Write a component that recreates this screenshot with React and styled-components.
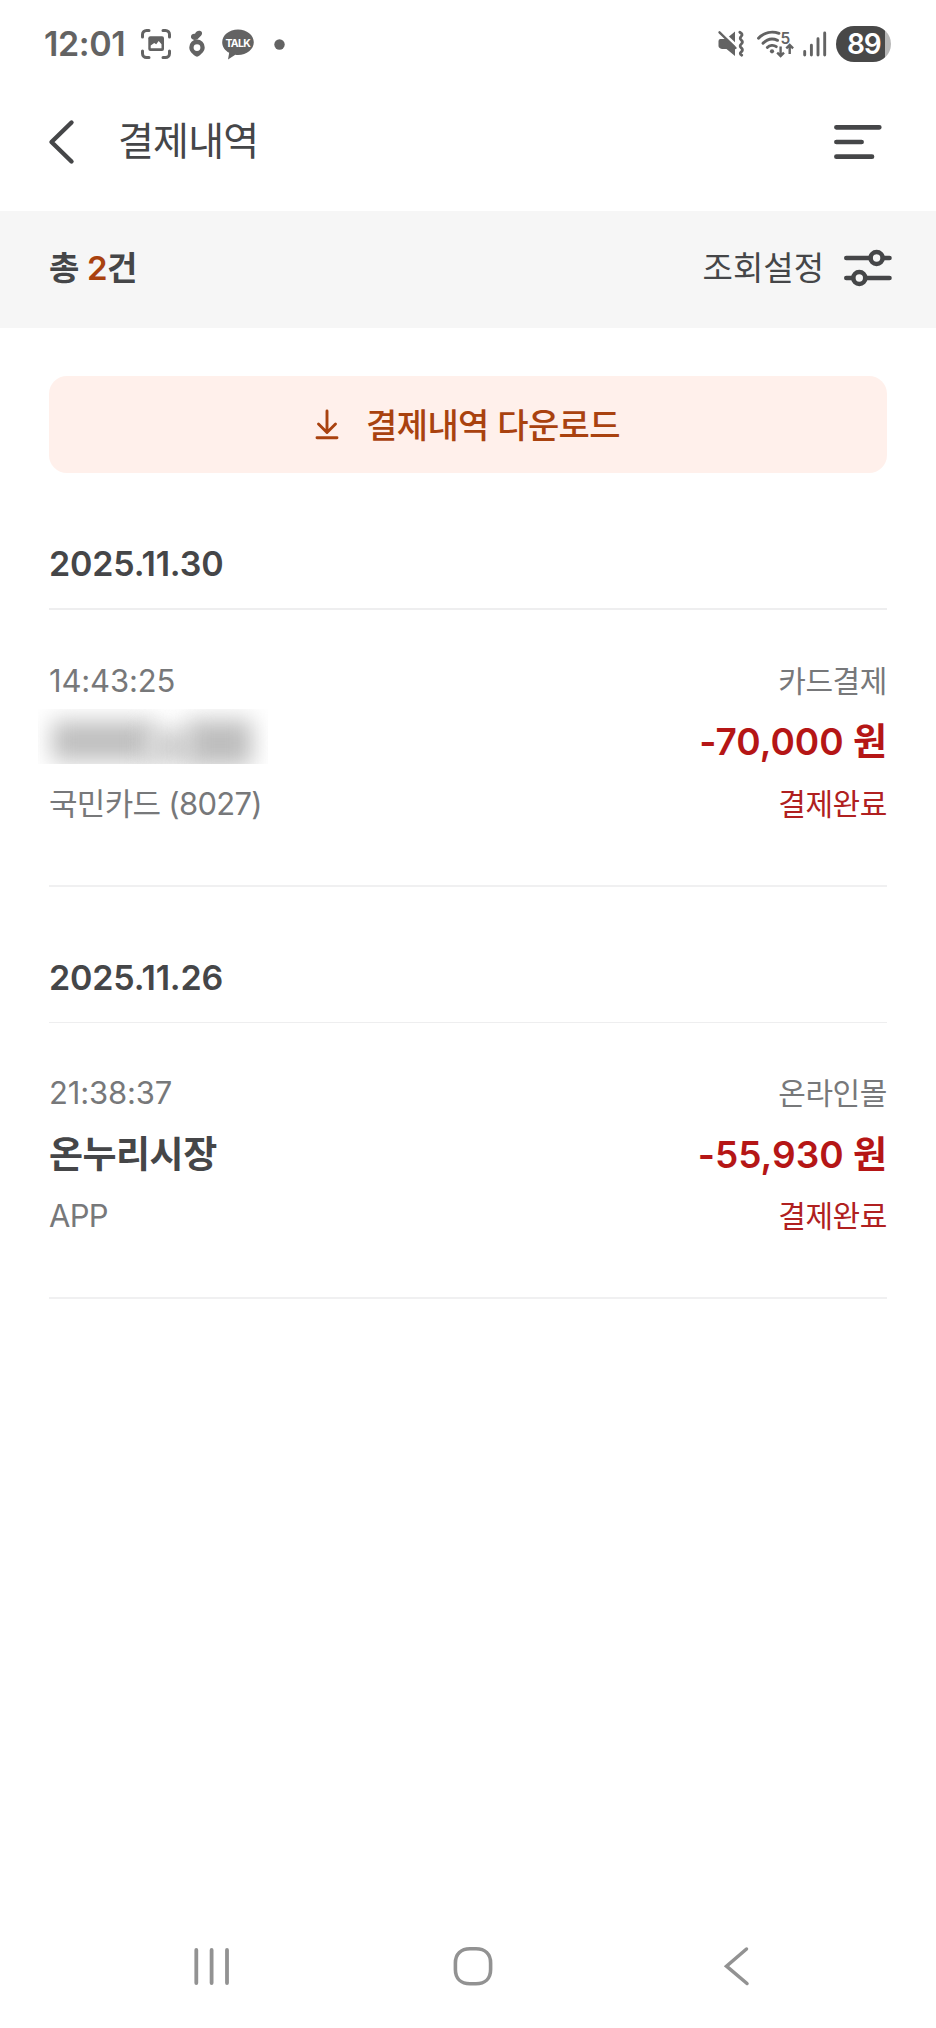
import React from "react";
import styled, { createGlobalStyle } from "styled-components";

const GlobalStyle = createGlobalStyle`
  * { box-sizing: border-box; }
  html, body { margin: 0; padding: 0; background: #fff; }
  body { font-family: Inter, "Noto Sans CJK KR", sans-serif; color: #454648; }
  button { font: inherit; border: 0; background: none; padding: 0; margin: 0; color: inherit; }
  svg { display: block; flex: none; overflow: visible; }
`;

const Screen = styled.div`
  width: 936px;
  height: 2028px;
  display: flex;
  flex-direction: column;
  background: #fff;
  overflow: hidden;
`;

const StatusBar = styled.div`
  height: 88px;
  flex: none;
  display: flex;
  justify-content: space-between;
  align-items: center;
  padding: 0 45px 0 44px;
  color: #636363;
`;

const StatusGroup = styled.div`
  display: flex;
  align-items: center;
`;

const Clock = styled.span`
  width: 97px;
  font-size: 34px;
  line-height: 40px;
  font-weight: 600;
  letter-spacing: -0.4px;
  white-space: nowrap;
`;

const Battery = styled.div`
  width: 55px;
  height: 36px;
  margin-left: 9px;
  border-radius: 18px;
  background: linear-gradient(90deg, #484848 0 48.5px, #b8b8b8 48.5px);
  color: #fff;
  font-size: 28px;
  line-height: 37px;
  font-weight: 600;
  letter-spacing: -1.2px;
  padding-left: 11px;
`;

const Header = styled.header`
  height: 123px;
  flex: none;
  display: flex;
  align-items: flex-start;
  padding: 25px 48px 0;
`;

const HeaderIcon = styled.span`
  display: flex;
  padding-top: ${(p) => p.$drop}px;
`;

const HeaderTitle = styled.h1`
  flex: 1;
  margin: 0 0 0 44px;
  font-size: 39px;
  line-height: 56px;
  font-weight: 400;
  letter-spacing: -0.8px;
`;

const SummaryBar = styled.div`
  height: 117px;
  flex: none;
  display: flex;
  align-items: center;
  justify-content: space-between;
  padding: 0 42px 4px 49px;
  background: #f6f6f6;
`;

const Total = styled.div`
  font-size: 33px;
  line-height: 44px;
  font-weight: 600;
  letter-spacing: -0.4px;
`;

const Count = styled.span`
  color: #a9420f;
`;

const FilterButton = styled.button`
  display: flex;
  align-items: center;
  gap: 20px;
  font-size: 33px;
  line-height: 44px;
`;

const Content = styled.main`
  flex: 1;
  padding: 48px 49px 0;
`;

const DownloadButton = styled.button`
  width: 100%;
  height: 97px;
  display: flex;
  align-items: center;
  justify-content: center;
  gap: 27px;
  padding: 0 1px 2px 0;
  border-radius: 18px;
  background: #fff0eb;
  color: #a9420f;
  font-size: 34px;
  font-weight: 500;
  letter-spacing: -0.6px;
`;

const DateHeading = styled.h2`
  margin: 0;
  padding: 69px 0 22px;
  border-bottom: ${(p) => p.$rule}px solid #eeeeef;
  font-size: 34px;
  line-height: 44px;
  font-weight: 600;
  letter-spacing: -0.15px;
`;

const Entry = styled.div`
  padding: 40px 0 50px;
  border-bottom: 2px solid #f0f0f1;
`;

const EntryRow = styled.div`
  height: 61.5px;
  display: flex;
  align-items: center;
  justify-content: space-between;
`;

const Meta = styled.span`
  font-size: 31px;
  line-height: 44px;
  letter-spacing: ${(p) => (p.$tight ? -0.7 : -0.15)}px;
  color: #77787a;
`;

const MetaKo = styled(Meta)`
  font-size: 30px;
  letter-spacing: -0.4px;
  color: ${(p) => (p.$done ? "#b02020" : "#77787a")};
`;

const Merchant = styled.strong`
  font-size: 37px;
  line-height: 50px;
  font-weight: 600;
  letter-spacing: -0.5px;
`;

const Amount = styled.strong`
  font-size: 37px;
  line-height: 50px;
  font-weight: 600;
  color: #b51616;
`;

const HiddenName = styled.div`
  width: 230px;
  height: 55px;
  margin: -12px 0 0 -11px;
  overflow: hidden;
  display: flex;
  align-items: center;
`;

const Smudge = styled.div`
  flex: none;
  width: ${(p) => p.$w}px;
  height: ${(p) => p.$h}px;
  margin-left: ${(p) => p.$x}px;
  margin-top: ${(p) => p.$y}px;
  background: ${(p) => p.$c};
  filter: blur(11px);
`;

const NavBar = styled.nav`
  height: 124px;
  flex: none;
  display: flex;
  align-items: center;
  justify-content: space-between;
  padding: 0 185px 0 191px;
`;

const CaptureIcon = () => (
  <svg width="30" height="30" viewBox="0 0 30 30" fill="none">
    <path d="M1.5 8V5.5a4 4 0 0 1 4-4H8M22 1.5h2.5a4 4 0 0 1 4 4V8M28.500 22v2.500a4 4 0 0 1-4 4H22M8 28.500H5.500a4 4 0 0 1-4-4V22" stroke="#636363" strokeWidth="3" strokeLinecap="round" />
    <rect x="7.300" y="7.300" width="15.700" height="14.700" rx="2" fill="#636363" />
    <path d="M9.700 19.200v-2.700l3.500-2.500 2 1.200 2.500-3.300 2.800 3.300v4z" fill="#fff" />
  </svg>
);

const CharmIcon = () => (
  <svg width="16" height="28" viewBox="0 0 16 28" fill="#636363">
    <path d="M2 7.500C1.500 5 3.500 3.500 6 3.800 7 1.200 9.500.2 11.500 1c2 .8 2 3 .7 4.500L8.500 9.300C6 10.500 2.800 10 2 7.500z" />
    <path fillRule="evenodd" d="M8 9.500a7.700 7.700 0 0 1 7.700 7.700c0 4-2.700 6-5.200 8.300-1.500 1.500-3.500 1.500-5 0C3 23.200.3 21.200.3 17.200A7.700 7.700 0 0 1 8 9.500zm0 4.700a3.400 3.400 0 1 0 0 6.800 3.400 3.400 0 0 0 0-6.800z" />
  </svg>
);

const TalkIcon = () => (
  <svg width="32" height="31" viewBox="0 0 32 31">
    <path d="M16 .5C7.200.5.200 6.200.200 13.200c0 4.500 2.800 8.300 7 10.600l-1.200 6.600 7.300-4.700c.9.100 1.800.2 2.700.2 8.800 0 15.800-5.700 15.800-12.700S24.800.500 16 .500z" fill="#636363" />
    <text x="15.800" y="17.500" textAnchor="middle" fontFamily="Inter, sans-serif" fontSize="10.500" fontWeight="700" letterSpacing="-0.700" fill="#fff">TALK</text>
  </svg>
);

const DotIcon = () => (
  <svg width="11" height="11" viewBox="0 0 11 11">
    <circle cx="5.500" cy="5.500" r="5.200" fill="#636363" />
  </svg>
);

const MuteIcon = () => (
  <svg width="27" height="26" viewBox="0 0 27 26" fill="none">
    <path d="M.5 10q0-2 2-2H8L17 .5v24.500l-8.500-7H4q-3.500-1-3.500-3z" fill="#636363" />
    <path d="M2.500-.5 20 16" stroke="#fff" strokeWidth="2.800" />
    <path d="M1.500 1.300 17.500 17" stroke="#636363" strokeWidth="2.400" strokeLinecap="round" />
    <path d="M21.800 1.300q3.600 2 1.500 3.900t0 3.900q2.300 2 0 3.900t0 3.900q2.300 2 0 3.900t.500 3.400" stroke="#636363" strokeWidth="2.800" strokeLinecap="round" strokeLinejoin="round" />
  </svg>
);

const WifiIcon = () => (
  <svg width="38" height="28" viewBox="0 0 38 28" fill="none">
    <g stroke="#636363" strokeWidth="2.900" strokeLinecap="round">
      <path d="M1.500 8.300C7.200 2.300 15 .700 22 3.300" />
      <path d="M6 13.300c4-4.100 9.500-5.200 14.500-3" />
      <path d="M10.300 17.500c2.300-2.400 6.300-2.900 9-.8" />
    </g>
    <circle cx="15" cy="21.300" r="2.100" fill="#636363" />
    <text x="23.500" y="13.500" fontFamily="Inter, sans-serif" fontSize="15.500" fontWeight="600" fill="#636363">5</text>
    <path d="M23.600 16.500v9M20.200 22.700l3.400 3.400 3.400-3.400M32.700 24v-8.500M29.300 18.300l3.400-3.400 3.400 3.400" stroke="#636363" strokeWidth="2.400" />
  </svg>
);

const SignalIcon = () => (
  <svg width="24" height="26" viewBox="0 0 24 26" stroke="#636363" strokeWidth="2.900" strokeLinecap="round">
    <path d="M1.700 20.500v3.500M8.400 14.300V24M15 7.700V24M21.700 2v22" />
  </svg>
);

const BackIcon = () => (
  <svg width="26" height="44" viewBox="0 0 26 44" fill="none" stroke="#454648" strokeWidth="4.400" strokeLinecap="round" strokeLinejoin="round">
    <path d="M23.500 2.500 3.500 22l20 19.500" />
  </svg>
);

const MenuIcon = () => (
  <svg width="54" height="36" viewBox="0 0 54 36" stroke="#454648" strokeWidth="4.700" strokeLinecap="round">
    <path d="M2.400 3.300H45.300M2.400 18H27.600M2.400 32.700H38" />
  </svg>
);

const SlidersIcon = () => (
  <svg width="50" height="38" viewBox="0 0 50 38" fill="#f6f6f6" stroke="#454648" strokeWidth="4.600" strokeLinecap="round">
    <path d="M2.300 9h43.200M2.300 29h43.200" />
    <circle cx="32.600" cy="9" r="6" />
    <circle cx="15.300" cy="29" r="6" />
  </svg>
);

const DownloadIcon = () => (
  <svg width="24" height="32" viewBox="0 0 24 32" fill="none" stroke="#a9420f" strokeWidth="2.900" strokeLinecap="round" strokeLinejoin="round">
    <path d="M12 3v20.500M3.500 16l8.500 8.500 8.500-8.500M2 29.700h20" />
  </svg>
);

const RecentsIcon = () => (
  <svg width="42" height="44" viewBox="0 0 42 44" stroke="#929292" strokeWidth="3.800" strokeLinecap="round">
    <path d="M5.300 6v33M20.600 6v33M36 6v33" />
  </svg>
);

const HomeShape = styled.svg`
  margin-right: 8px;
`;

const HomeIcon = () => (
  <HomeShape width="44" height="44" viewBox="0 0 44 44" fill="none" stroke="#929292" strokeWidth="3.600">
    <path d="M19 4.700h6C34 4.700 39.600 10 39.600 19v6.500c0 9-5.600 14.300-14.600 14.300h-6C10 39.800 4.400 34.500 4.400 25.500V19C4.400 10 10 4.700 19 4.700z" />
  </HomeShape>
);

const NavBackIcon = () => (
  <svg width="30" height="44" viewBox="0 0 30 44" fill="none" stroke="#929292" strokeWidth="3.500" strokeLinecap="round">
    <path d="M25.500 5 5.500 22.200l20.500 17.300" />
  </svg>
);

const Spaced = styled.span`
  display: flex;
  margin-left: ${(p) => p.$gap}px;
`;

const BlurredName = () => (
  <HiddenName>
    <Smudge $w={102} $h={40} $x={14} $y={10} $c="#bfbfbf" />
    <Smudge $w={48} $h={34} $x={-8} $y={22} $c="#cfcfcf" />
    <Smudge $w={64} $h={46} $x={-6} $y={14} $c="#bdbdbd" />
  </HiddenName>
);

const sections = [
  {
    date: "2025.11.30",
    rule: 2,
    time: "14:43:25",
    channel: "카드결제",
    merchant: null,
    amount: "-70,000 원",
    method: "국민카드 (8027)",
  },
  {
    date: "2025.11.26",
    rule: 1,
    time: "21:38:37",
    channel: "온라인몰",
    merchant: "온누리시장",
    amount: "-55,930 원",
    method: "APP",
  },
];

export default function App() {
  return (
    <Screen>
      <GlobalStyle />
      <StatusBar>
        <StatusGroup>
          <Clock>12:01</Clock>
          <CaptureIcon />
          <Spaced $gap={18}><CharmIcon /></Spaced>
          <Spaced $gap={17}><TalkIcon /></Spaced>
          <Spaced $gap={20}><DotIcon /></Spaced>
        </StatusGroup>
        <StatusGroup>
          <MuteIcon />
          <Spaced $gap={12}><WifiIcon /></Spaced>
          <Spaced $gap={8}><SignalIcon /></Spaced>
          <Battery>89</Battery>
        </StatusGroup>
      </StatusBar>
      <Header>
        <HeaderIcon $drop={7}><BackIcon /></HeaderIcon>
        <HeaderTitle>결제내역</HeaderTitle>
        <HeaderIcon $drop={11}><MenuIcon /></HeaderIcon>
      </Header>
      <SummaryBar>
        <Total>총 <Count>2</Count>건</Total>
        <FilterButton>조회설정<SlidersIcon /></FilterButton>
      </SummaryBar>
      <Content>
        <DownloadButton><DownloadIcon />결제내역 다운로드</DownloadButton>
        {sections.map((s) => (
          <section key={s.date}>
            <DateHeading $rule={s.rule}>{s.date}</DateHeading>
            <Entry>
              <EntryRow>
                <Meta>{s.time}</Meta>
                <MetaKo>{s.channel}</MetaKo>
              </EntryRow>
              <EntryRow>
                {s.merchant ? <Merchant>{s.merchant}</Merchant> : <BlurredName />}
                <Amount>{s.amount}</Amount>
              </EntryRow>
              <EntryRow>
                <Meta $tight>{s.method}</Meta>
                <MetaKo $done>결제완료</MetaKo>
              </EntryRow>
            </Entry>
          </section>
        ))}
      </Content>
      <NavBar>
        <RecentsIcon />
        <HomeIcon />
        <NavBackIcon />
      </NavBar>
    </Screen>
  );
}
